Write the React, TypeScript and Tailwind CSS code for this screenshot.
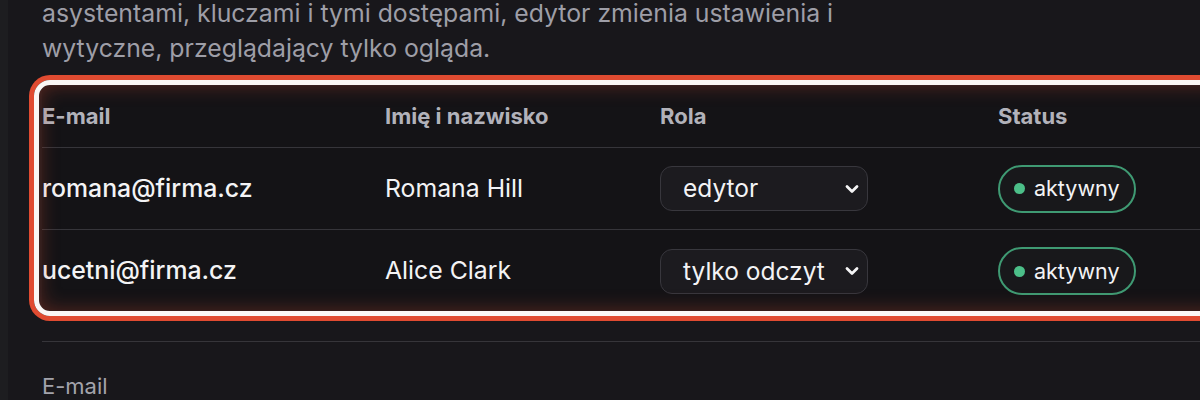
import React from "react";

const rows = [
  { email: "romana@firma.cz", name: "Romana Hill", role: "edytor" },
  { email: "ucetni@firma.cz", name: "Alice Clark", role: "tylko odczyt" },
];

function Chevron() {
  return (
    <svg width="14" height="10" viewBox="0 0 14 10" className="shrink-0">
      <path d="M2 2.5 L7 7.5 L12 2.5" fill="none" stroke="#f4f4f5" strokeWidth="2.8" strokeLinecap="round" strokeLinejoin="round" />
    </svg>
  );
}

export default function App() {
  return (
    <div
      className="w-[1200px] h-[400px] overflow-hidden flex bg-[#18171b]"
      style={{ fontFamily: "Inter, 'Noto Sans', sans-serif" }}
    >
      <div className="w-[8px] shrink-0 bg-[#1d1d20]" />
      <div className="flex-1 pl-[34px] flex flex-col">
        <p className="mt-[-4px] text-[24.8px] leading-[35px] text-[#9e9ea7] w-[1000px]">
          asystentami, kluczami i tymi dostępami, edytor zmienia ustawienia i
          <br />
          wytyczne, przeglądający tylko ogląda.
        </p>
        <div className="relative mt-[20px] w-[1300px]">
          <div className="bg-[#141316]">
            <div className="grid grid-cols-[343px_275px_338px_1fr] h-[62px] items-center border-b border-[#36353a] text-[22px] font-bold text-[#b2b2ba]">
              <div>E-mail</div>
              <div>Imię i nazwisko</div>
              <div>Rola</div>
              <div>Status</div>
            </div>
            {rows.map((r, i) => (
              <div
                key={r.email}
                className={`grid grid-cols-[343px_275px_338px_1fr] h-[82px] items-center text-[24.8px] text-[#f3f3f5] ${i === 0 ? "border-b border-[#36353a]" : ""}`}
              >
                <div className="font-medium">{r.email}</div>
                <div>{r.name}</div>
                <div>
                  <div className="w-[208px] h-[45px] rounded-[12px] border border-[#38373d] bg-[#1c1b1f] flex items-center justify-between pl-[22px] pr-[8px]">
                    <span className="text-[24.5px] text-[#f3f3f5] whitespace-nowrap">{r.role}</span>
                    <Chevron />
                  </div>
                </div>
                <div>
                  <div className="inline-flex items-center gap-[9px] h-[48px] pl-[14px] pr-[15px] rounded-full border-2 border-[#3f9a73] bg-[#18181b]">
                    <span className="w-[11px] h-[11px] rounded-full bg-[#4cbf89]" />
                    <span className="text-[21.5px] text-[#f3f3f5]">aktywny</span>
                  </div>
                </div>
              </div>
            ))}
          </div>
          <div className="pointer-events-none absolute left-[-8px] top-[-6px] bottom-[-4px] right-0 rounded-[16px] border-[5px] border-[#fbf7f5] shadow-[0_0_0_5px_#e04b31,inset_0_0_20px_rgba(200,70,45,0.4)]" />
        </div>
        <div className="mt-[29px] border-t border-[#36353a] w-[1200px]" />
        <div className="mt-[28px] text-[22px] text-[#a3a3ab]">E-mail</div>
      </div>
    </div>
  );
}
